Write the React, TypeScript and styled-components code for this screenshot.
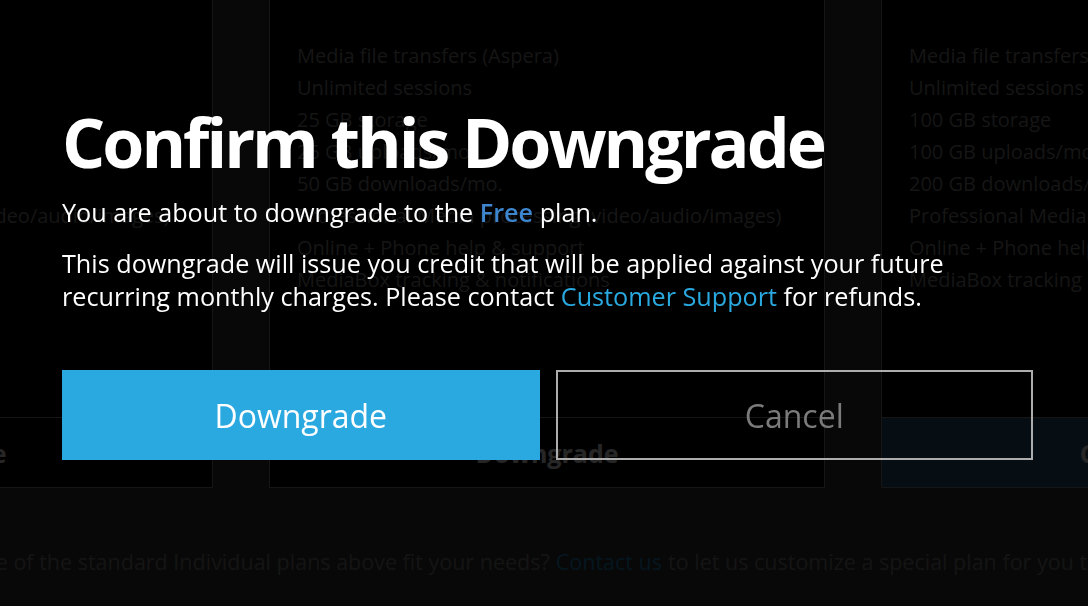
import React from "react";
import styled, { createGlobalStyle } from "styled-components";

const GlobalStyle = createGlobalStyle`
  html, body {
    margin: 0;
    padding: 0;
    background: #353535;
    overflow: hidden;
  }
  body {
    font-family: "Open Sans", "Liberation Sans", sans-serif;
  }
  * { box-sizing: border-box; }
`;

const Page = styled.div`
  position: relative;
  width: 1088px;
  height: 606px;
  overflow: hidden;
  background: #353535;
  color: #8c8c8c;
`;

const CardRow = styled.div`
  display: flex;
  justify-content: center;
  gap: 56px;
  margin-top: -60px;
  padding-left: 6px;
`;

const Card = styled.div`
  flex: 0 0 556px;
  height: 548px;
  display: flex;
  flex-direction: column;
  background: #000;
  border: 1px solid #939393;
`;

const CardHeader = styled.div`
  padding: 32px 27px 0;
  font-size: 20px;
  line-height: 28px;
  white-space: nowrap;
`;

const FeatureList = styled.ul`
  list-style: none;
  margin: 39px 0 0;
  padding: 0 27px;
  font-size: 20px;
  line-height: 32px;
  white-space: nowrap;
`;

const CardAction = styled.div<{ $filled?: boolean }>`
  margin-top: auto;
  height: 70px;
  display: flex;
  align-items: center;
  justify-content: center;
  border-top: 1px solid #939393;
  background: ${(p) => (p.$filled ? "#285d85" : "transparent")};
  color: #fff;
  font-size: 25px;
  font-weight: 700;
`;

const Footer = styled.p`
  margin: 58px 0 0;
  padding-left: 7px;
  display: flex;
  justify-content: center;
  font-size: 21.5px;
  line-height: 32px;
  white-space: nowrap;
  color: #888;
`;

const FooterLink = styled.span`
  color: #2193cf;
  margin: 0 0.28em;
`;

const Overlay = styled.div`
  position: fixed;
  inset: 0;
  background: rgba(0, 0, 0, 0.85);
  z-index: 10;
`;

const Modal = styled.div`
  display: flex;
  flex-direction: column;
  padding: 100px 55px 0 62px;
  color: #fff;
`;

const Title = styled.h1`
  margin: 0;
  font-size: 68px;
  line-height: 84px;
  font-weight: 700;
  letter-spacing: -3px;
  white-space: nowrap;
`;

const Text = styled.p<{ $gap: number }>`
  margin: ${(p) => p.$gap}px 0 0;
  font-size: 25.2px;
  line-height: 33px;
`;

const PlanLink = styled.span`
  color: #3d86cf;
  font-weight: 600;
`;

const SupportLink = styled.span`
  color: #29a9e0;
`;

const Actions = styled.div`
  display: grid;
  grid-template-columns: 1fr 1fr;
  gap: 16px;
  margin-top: 57px;
`;

const Button = styled.button<{ $primary?: boolean }>`
  height: 90px;
  font-family: "Open Sans", "Liberation Sans", sans-serif;
  font-size: 32px;
  cursor: pointer;
  border: ${(p) => (p.$primary ? "none" : "2px solid #adadad")};
  background: ${(p) => (p.$primary ? "#29a9e0" : "transparent")};
  color: ${(p) => (p.$primary ? "#fff" : "#7b7b7b")};
`;

const plans = [
  {
    header: "Perfect for getting started, try it today",
    features: [
      "Media file transfers (Aspera)",
      "Limited sessions",
      "5 GB storage",
      "5 GB uploads/mo.",
      "10 GB downloads/mo.",
      "Professional Media processing (video/audio/images)",
      "Online help & support",
      "MediaBox tracking & notifications",
    ],
    action: "Downgrade",
  },
  {
    header: "Everything you need for growing projects",
    features: [
      "Media file transfers (Aspera)",
      "Unlimited sessions",
      "25 GB storage",
      "25 GB uploads/mo.",
      "50 GB downloads/mo.",
      "Professional Media processing (video/audio/images)",
      "Online + Phone help & support",
      "MediaBox tracking & notifications",
    ],
    action: "Downgrade",
  },
  {
    header: "Everything you need, plus priority support",
    features: [
      "Media file transfers (Aspera)",
      "Unlimited sessions",
      "100 GB storage",
      "100 GB uploads/mo.",
      "200 GB downloads/mo.",
      "Professional Media processing (video/audio/images)",
      "Online + Phone help & support",
      "MediaBox tracking & notifications",
    ],
    action: "Current Plan",
    filled: true,
  },
];

export default function App() {
  return (
    <>
      <GlobalStyle />
      <Page>
        <CardRow>
          {plans.map((plan, i) => (
            <Card key={i}>
              <CardHeader>{plan.header}</CardHeader>
              <FeatureList>
                {plan.features.map((f) => (
                  <li key={f}>{f}</li>
                ))}
              </FeatureList>
              <CardAction $filled={plan.filled}>{plan.action}</CardAction>
            </Card>
          ))}
        </CardRow>
        <Footer>
          None of the standard Individual plans above fit your needs?
          <FooterLink>Contact us</FooterLink>
          to let us customize a special plan for you today.
        </Footer>
        <Overlay>
          <Modal>
            <Title>Confirm this Downgrade</Title>
            <Text $gap={12}>
              You are about to downgrade to the <PlanLink>Free</PlanLink> plan.
            </Text>
            <Text $gap={18}>
              This downgrade will issue you credit that will be applied against your future
              recurring monthly charges. Please contact{" "}
              <SupportLink>Customer Support</SupportLink> for refunds.
            </Text>
            <Actions>
              <Button $primary>Downgrade</Button>
              <Button>Cancel</Button>
            </Actions>
          </Modal>
        </Overlay>
      </Page>
    </>
  );
}
